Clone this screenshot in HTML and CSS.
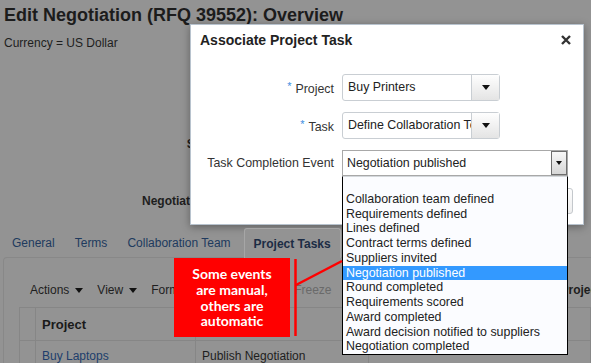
FILE: index.html
```html
<!DOCTYPE html>
<html lang="en">
<head>
    <meta charset="UTF-8">
    <title>Edit Negotiation</title>
    <link rel="stylesheet" href="styles.css">
</head>
<body>
    <div class="page">
        <h1 class="page-title">Edit Negotiation (RFQ 39552): Overview</h1>
        <div class="currency">Currency = US Dollar</div>
        <div class="summary">
            <span class="summary-label">Synopsis</span>
            <span class="summary-value">Printers for the new office</span>
            <span class="summary-label">Negotiation Style</span>
            <span class="summary-value">Standard</span>
        </div>
        <div class="tabs">
            <a class="tab" href="#">General</a>
            <a class="tab" href="#">Terms</a>
            <a class="tab" href="#">Collaboration Team</a>
            <a class="tab tab-active" href="#">Project Tasks</a>
        </div>
        <div class="panel">
            <div class="toolbar">
                <span class="menu">Actions <i class="caret"></i></span>
                <span class="menu">View <i class="caret"></i></span>
                <span class="menu">Format <i class="caret"></i></span>
                <span class="tool-disabled">Freeze</span>
                <span class="tool-strong">Project</span>
            </div>
            <table class="grid">
                <tr>
                    <th class="sel"></th>
                    <th class="col-project">Project</th>
                    <th class="col-task"></th>
                    <th></th>
                </tr>
                <tr>
                    <td class="sel"></td>
                    <td><a href="#">Buy Laptops</a></td>
                    <td>Publish Negotiation</td>
                    <td></td>
                </tr>
            </table>
        </div>
    </div>

    <div class="dialog">
        <div class="dialog-head">
            <span class="dialog-title">Associate Project Task</span>
            <svg class="close" width="10" height="10" viewBox="0 0 10 10">
                <path d="M1 1 L9 9 M9 1 L1 9" stroke="#333" stroke-width="2.4"/>
            </svg>
        </div>
        <div class="form">
            <label class="field-label"><span class="req">*</span>Project</label>
            <div class="combo">
                <span class="combo-value">Buy Printers</span>
                <span class="combo-btn"><i class="caret"></i></span>
            </div>
            <label class="field-label"><span class="req">*</span>Task</label>
            <div class="combo">
                <span class="combo-value">Define Collaboration Team</span>
                <span class="combo-btn"><i class="caret"></i></span>
            </div>
            <label class="field-label">Task Completion Event</label>
            <div class="choice">
                <span class="choice-value">Negotiation published</span>
                <span class="choice-btn"><i class="caret caret-small"></i></span>
            </div>
        </div>
        <div class="dialog-foot">
            <button class="btn">OK</button>
        </div>
    </div>

    <ul class="event-list">
        <li>&nbsp;</li>
        <li>Collaboration team defined</li>
        <li>Requirements defined</li>
        <li>Lines defined</li>
        <li>Contract terms defined</li>
        <li>Suppliers invited</li>
        <li class="picked">Negotiation published</li>
        <li>Round completed</li>
        <li>Requirements scored</li>
        <li>Award completed</li>
        <li>Award decision notified to suppliers</li>
        <li>Negotiation completed</li>
    </ul>

    <div class="callout">Some events<br>are manual,<br>others are<br>automatic</div>
    <svg class="callout-lines" width="591" height="363">
        <line x1="295.5" y1="259" x2="295.5" y2="336" stroke="#ff0000" stroke-width="2.5"/>
        <line x1="296" y1="285" x2="342" y2="261" stroke="#ff0000" stroke-width="2.5"/>
    </svg>
</body>
</html>
```

FILE: styles.css
```css
html, body {
    margin: 0;
    padding: 0;
    overflow: hidden;
}
body {
    font-family: "Liberation Sans", Arial, sans-serif;
    font-size: 12px;
    color: #1e1e1e;
    background-color: #939393;
    width: 591px;
    height: 363px;
    position: relative;
}
.page {
    height: 363px;
    overflow: hidden;
}
.page-title {
    margin: 0;
    padding: 4px 4px 0;
    font-size: 18px;
    line-height: 22px;
    color: #1c1c1c;
}
.currency {
    margin-top: 10px;
    padding-left: 4px;
    line-height: 14px;
}
.summary {
    display: grid;
    grid-template-columns: 240px 1fr;
    column-gap: 8px;
    row-gap: 41px;
    margin-top: 86px;
    line-height: 16px;
}
.summary-label {
    text-align: right;
    font-weight: bold;
}
.tabs {
    display: flex;
    margin-top: 19px;
    padding-left: 2px;
    height: 29px;
}
.tab {
    padding: 0 10px;
    line-height: 31px;
    color: #203a5e;
    text-decoration: none;
}
.tab-active {
    position: relative;
    z-index: 1;
    margin-left: 3px;
    padding: 0 9px;
    height: 30px;
    font-weight: bold;
    color: #1c2c44;
    background-color: #939393;
    border: 1px solid #a6a6a6;
    border-bottom: none;
    border-radius: 3px 3px 0 0;
    box-sizing: border-box;
    line-height: 30px;
}
.panel {
    margin-left: 3px;
    height: 106px;
    box-sizing: border-box;
    border: 1px solid #888;
    border-right: none;
    border-bottom: none;
    border-radius: 4px 0 0 0;
    padding: 24px 0 0 15px;
    overflow: hidden;
}
.toolbar {
    display: flex;
    align-items: center;
    padding-left: 11px;
    line-height: 16px;
    white-space: nowrap;
}
.menu {
    display: flex;
    align-items: center;
    gap: 6px;
    margin-right: 14px;
}
.caret {
    display: inline-block;
    width: 0;
    height: 0;
    border-left: 4px solid transparent;
    border-right: 4px solid transparent;
    border-top: 5px solid #111;
}
.caret-small {
    border-left-width: 3px;
    border-right-width: 3px;
    border-top-width: 4px;
}
.tool-disabled {
    margin-left: 77px;
    color: #6a6a6a;
}
.tool-strong {
    margin-left: 229px;
    font-weight: bold;
}
.grid {
    margin-top: 9px;
    border-collapse: collapse;
    width: 572px;
}
.grid th, .grid td {
    border: 1px solid #868686;
    text-align: left;
    padding: 0 6px;
    white-space: nowrap;
}
.grid th {
    height: 32px;
    font-size: 13px;
    color: #1a1a1a;
}
.grid td {
    height: 22px;
    padding-top: 9px;
    line-height: 13px;
    vertical-align: top;
    border-bottom: none;
    box-sizing: border-box;
}
.grid .sel {
    width: 15px;
    padding: 0;
}
.col-project {
    width: 147px;
}
.col-task {
    width: 160px;
}
.grid a {
    color: #203e6c;
    text-decoration: none;
}

.dialog {
    position: absolute;
    left: 190px;
    top: 24px;
    width: 394px;
    box-sizing: border-box;
    background-color: #fff;
    border: 1px solid #b8c3ce;
    box-shadow: 0 2px 8px rgba(0, 0, 0, 0.35);
    font-size: 12.4px;
}
.dialog-head {
    display: flex;
    justify-content: space-between;
    align-items: center;
    padding: 6px 12px 0 9px;
    height: 18px;
}
.dialog-title {
    font-size: 14px;
    font-weight: bold;
    color: #222;
}
.form {
    display: grid;
    grid-template-columns: 143px auto;
    column-gap: 8px;
    row-gap: 11px;
    align-items: center;
    justify-items: start;
    margin-top: 25px;
}
.field-label {
    justify-self: end;
    color: #333;
}
.req {
    color: #3b8de0;
    font-size: 11px;
    vertical-align: 3px;
    margin-right: 4px;
}
.combo {
    display: flex;
    width: 158px;
    height: 27px;
    box-sizing: border-box;
    border: 1px solid #c9ced3;
    border-radius: 3px;
}
.combo-value {
    flex: 1;
    padding-left: 5px;
    line-height: 25px;
    overflow: hidden;
    white-space: nowrap;
    color: #222;
}
.combo-btn {
    width: 27px;
    display: flex;
    align-items: center;
    justify-content: center;
    border-left: 1px solid #c9ced3;
    background: linear-gradient(#fefefe, #e4e4e4);
}
.choice {
    display: flex;
    width: 226px;
    height: 26px;
    box-sizing: border-box;
    border: 1px solid #a8a8a8;
}
.choice-value {
    flex: 1;
    padding-left: 4px;
    line-height: 24px;
    color: #222;
}
.choice-btn {
    width: 16px;
    display: flex;
    align-items: center;
    justify-content: center;
    box-sizing: border-box;
    border: 1px solid #6e6e6e;
    background: linear-gradient(#f8f8f8, #d6d6d6);
}
.dialog-foot {
    display: flex;
    justify-content: flex-end;
    padding: 12px 10px 10px;
}
.btn {
    height: 26px;
    padding: 0 14px;
    font-family: inherit;
    font-size: 12px;
    background: linear-gradient(#fcfcfc, #eeeeee);
    border: 1px solid #c4c8cc;
    border-radius: 3px;
}

.event-list {
    position: absolute;
    left: 342px;
    top: 176px;
    width: 226px;
    box-sizing: border-box;
    margin: 0;
    padding: 0;
    list-style: none;
    background-color: #fbfcff;
    border: 1px solid #000;
    border-top-color: #d4d8dc;
    font-size: 12.4px;
    color: #222;
}
.event-list li {
    height: 14.75px;
    line-height: 14.75px;
    padding-left: 3px;
    white-space: nowrap;
}
.event-list .picked {
    background-color: #3399ff;
    color: #fff;
}

.callout {
    position: absolute;
    left: 174px;
    top: 258px;
    width: 116px;
    height: 79px;
    display: flex;
    align-items: center;
    justify-content: center;
    text-align: center;
    background-color: #ff0000;
    color: #fff;
    font-family: Lato, "Liberation Sans", sans-serif;
    font-weight: bold;
    font-size: 14px;
    line-height: 15.7px;
}
.callout-lines {
    position: absolute;
    left: 0;
    top: 0;
    pointer-events: none;
}
```
